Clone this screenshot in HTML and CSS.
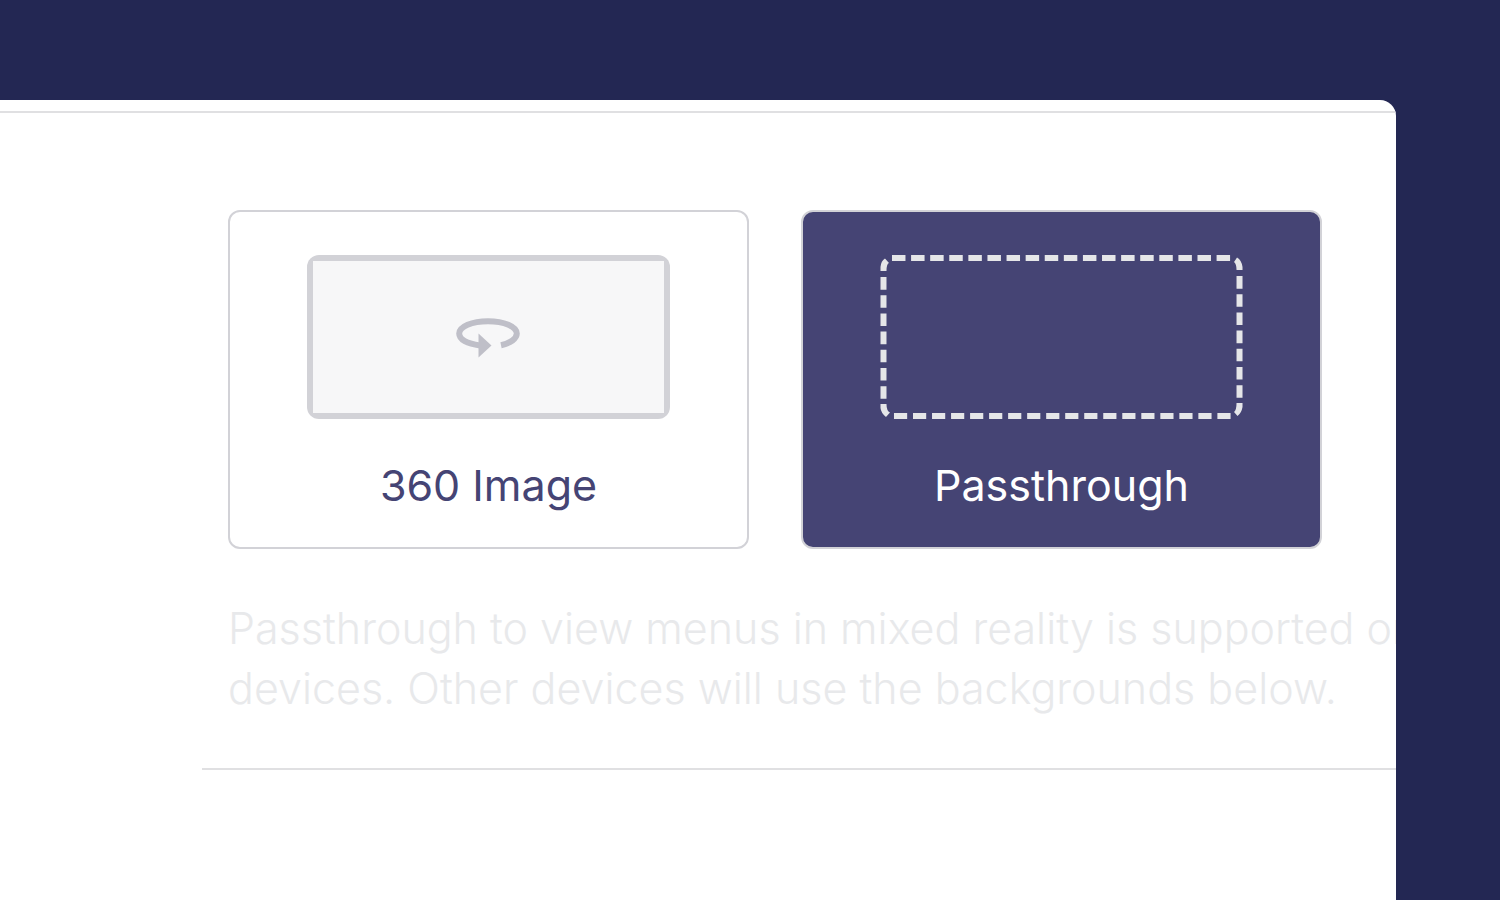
FILE: index.html
```html
<!DOCTYPE html>
<html lang="en">
<head>
    <meta charset="UTF-8">
    <title>Background</title>
    <link rel="stylesheet" href="styles.css">
</head>
<body>
<main class="panel">
    <div class="panel-top"></div>
    <section class="setting">
        <div class="options">
            <button type="button" class="option" aria-pressed="false">
                <span class="preview framed">
                    <span class="screen">
                        <svg class="icon" viewBox="0 0 64 38" aria-hidden="true">
                            <path d="M24 27.4C11 26 3.2 21.6 3.2 15.6C3.2 8.6 16 3.2 32 3.2S60.800 8.600 60.800 15.600C60.800 20.600 54.500 25.200 45 27.200" fill="none" stroke="#bfbfc8" stroke-width="6"/>
                            <path d="M22.500 15.500L35.500 27.500L22.500 39.500Z" fill="#bfbfc8"/>
                        </svg>
                    </span>
                </span>
                <span>360 Image</span>
            </button>
            <button type="button" class="option selected" aria-pressed="true">
                <svg class="preview" viewBox="0 0 363 164" aria-hidden="true">
                    <g fill="none" stroke="#e5e6e8" stroke-width="6">
                        <path d="M12 3H352" stroke-dasharray="13.500 5.620"/>
                        <path d="M14 161H352" stroke-dasharray="13.200 5.850"/>
                        <path d="M3.500 22V144" stroke-dasharray="12.600 5.600"/>
                        <path d="M360 21V143" stroke-dasharray="12.600 5.600"/>
                    </g>
                    <!-- corners -->
                    <g fill="#e5e6e8">
                        <path d="M.5 16V12Q1 6 5 3.500L9 8Q6.500 9 6.500 16Z"/>
                        <path d="M363 15V12Q362 5 357.500 2.500L354.500 7Q357 9 357 15Z"/>
                        <path d="M.5 149V153Q1 158 6 162L10 157.500Q6.500 156 6.500 149Z"/>
                        <path d="M363 148V152Q362 158 358 161L354.500 157Q357 155 357 148Z"/>
                    </g>
                </svg>
                <span>Passthrough</span>
            </button>
        </div>
        <p class="note">Passthrough to view menus in mixed reality is supported on<br>devices. Other devices will use the backgrounds below.</p>
    </section>
</main>
</body>
</html>
```
FILE: styles.css
```css
* {
    margin: 0;
    padding: 0;
    box-sizing: border-box;
}

body {
    min-height: 100vh;
    padding: 100px 104px 0 0;
    display: flex;
    background-color: #232753;
    font-family: Inter, "Liberation Sans", sans-serif;
}

.panel {
    flex: 1;
    min-width: 0;
    overflow: hidden;
    background-color: #fff;
    border-top-right-radius: 16px;
}

.panel-top {
    height: 13px;
    border-bottom: 2px solid #e0e0e2;
}

.setting {
    margin-left: 202px;
    padding: 97px 74px 50px 26px;
    border-bottom: 2px solid #e0e0e2;
}

.options {
    display: grid;
    grid-template-columns: 1fr 1fr;
    gap: 52px;
}

.option {
    display: flex;
    flex-direction: column;
    align-items: center;
    gap: 36px;
    padding: 43px 20px 32px;
    border: 2px solid #d2d2d7;
    border-radius: 12px;
    background-color: #fff;
    color: #454474;
    font-family: inherit;
    font-size: 43px;
    line-height: 60px;
    cursor: pointer;
}

.selected {
    background-color: #454474;
    color: #fff;
}

.preview {
    width: 76%;
    height: 164px;
}

.framed {
    display: flex;
    padding: 6px;
    border-radius: 12px;
    background-color: #d2d2d7;
}

.screen {
    flex: 1;
    display: flex;
    align-items: center;
    justify-content: center;
    background-color: #f7f7f8;
}

.icon {
    width: 64px;
    height: 38px;
    overflow: visible;
}

.note {
    margin-top: 49px;
    color: #e8e9eb;
    font-size: 43px;
    font-weight: 300;
    line-height: 60px;
    white-space: nowrap;
}
```
